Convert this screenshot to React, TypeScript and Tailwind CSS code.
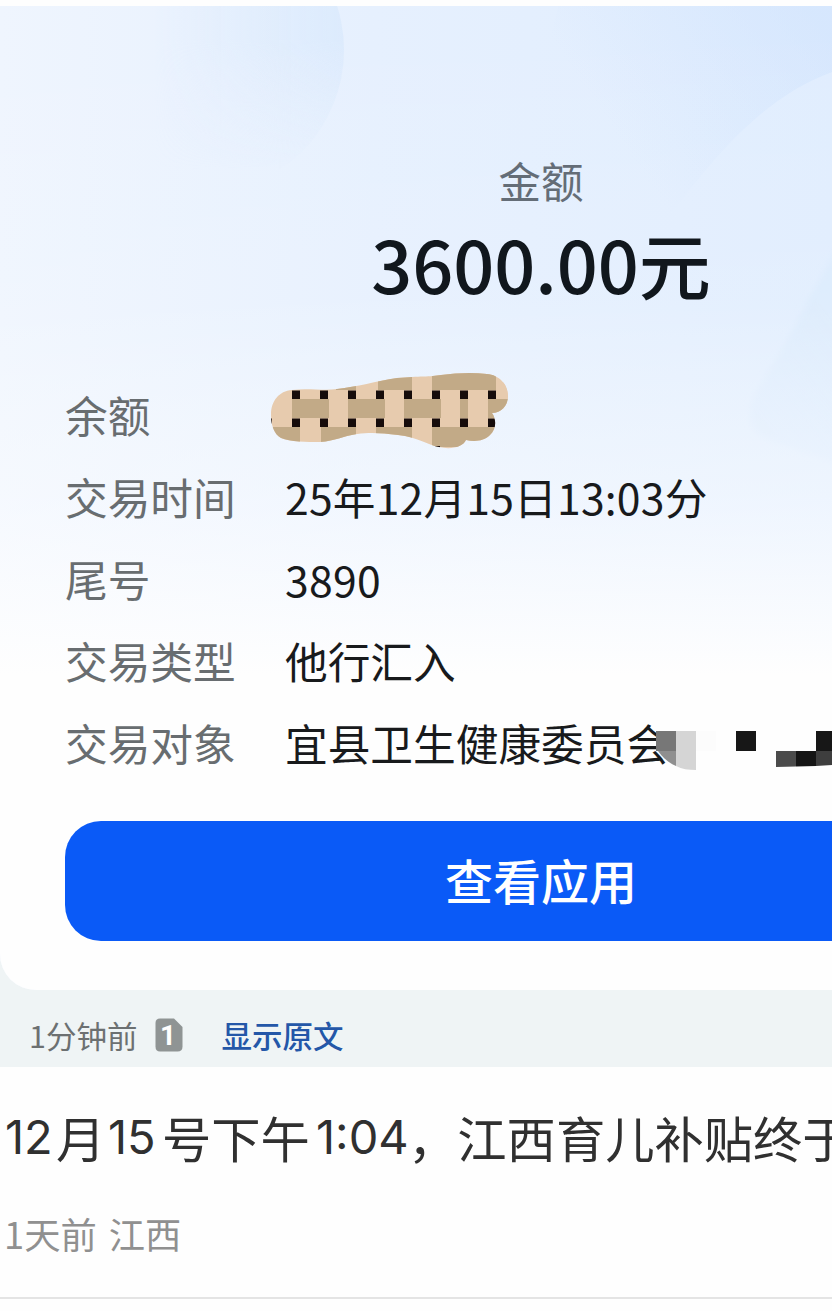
import type { ReactNode } from 'react';

const ROWS: { label: string; value: ReactNode }[] = [
  { label: '余额', value: <BalanceMask /> },
  { label: '交易时间', value: <span className="tracking-[0.2px]">25年12月15日13:03分</span> },
  { label: '尾号', value: <span className="tracking-[0.3px]">3890</span> },
  { label: '交易类型', value: '他行汇入' },
  {
    label: '交易对象',
    value: (
      <>
        宜县卫生健康委员会
        <PayeeMask />
      </>
    ),
  },
];

const DOT_COLUMNS = [292, 320, 348, 376, 404, 432, 460, 488];
const TAN_BLOCKS = [
  // x, y, width, height
  [336, 380, 20, 10],
  [378, 370, 34, 20],
  [432, 365, 64, 25],
  [292, 399, 37, 19],
  [348, 399, 37, 19],
  [404, 399, 37, 19],
  [460, 399, 8, 19],
  [488, 399, 22, 19],
  [268, 427, 32, 18],
  [321, 427, 35, 18],
  [376, 427, 36, 18],
  [432, 427, 68, 20],
];

/* Plaid brush stroke hiding the balance */
function BalanceMask() {
  return (
    <svg className="absolute -left-[17px] -top-[5px] h-[80px] w-[244px]" viewBox="268 370 244 80">
      <defs>
        <clipPath id="stroke">
          <path d="M271 415C271 401 279 391 292 390C308 388 325 391 337 389C357 387 376 381 397 378C420 376 430 377 441 375C456 373 472 372 487 374C499 375 508 384 508 396C508 406 501 413 492 413C497 420 496 430 490 435C484 441 475 442 466 440C463 447 451 450 439 447C427 445 418 437 398 435C382 433 371 432 357 434C342 436 336 441 320 442C307 442 290 442 281 438C274 434 271 425 271 415Z" />
        </clipPath>
      </defs>
      <g clipPath="url(#stroke)">
        <rect x="268" y="370" width="244" height="80" fill="#e7cbae" />
        {TAN_BLOCKS.map(([x, y, w, h]) => (
          <rect key={`${x}-${y}`} x={x} y={y} width={w} height={h} fill="#c2aa87" />
        ))}
        <rect x="496" y="382" width="14" height="17" fill="#e7cbae" />
        {DOT_COLUMNS.map((x) => (
          <g key={x} fill="#160c0b">
            <rect x={x} y="390.5" width="8" height="8.5" />
            <rect x={x} y="418.5" width="8" height="8.5" />
          </g>
        ))}
        <rect x="264" y="418.5" width="8" height="8.5" fill="#160c0b" />
        <rect x="432" y="446" width="8" height="8" fill="#160c0b" />
      </g>
    </svg>
  );
}

/* Mosaic over the rest of the payee name */
function PayeeMask() {
  return (
    <svg className="absolute left-[371px] top-0 h-[82px] w-[176px]" viewBox="656 703 176 82">
      <path d="M658 751H676V766C669 763 663 758 658 751Z" fill="#8f8f8f" />
      <path d="M656 731h20v20h-20z" fill="#777" />
      <path d="M676 731H696V770C688 770 682 769 676 766Z" fill="#d5d5d5" />
      <path d="M696 731h20v20h-20z" fill="#fcfcfc" />
      <path d="M736 731h20v20h-20z" fill="#171717" />
      <path d="M816 731h20v20h-20z" fill="#171717" />
      <path d="M776 751H796V766.500L776 767Z" fill="#4b4b4b" />
      <path d="M796 751H816V766L796 766.500Z" fill="#151515" />
      <path d="M816 751H832V765L816 766Z" fill="#3e3e3e" />
    </svg>
  );
}

function CardBackdrop() {
  return (
    <svg className="absolute left-0 top-0 h-[984px] w-[832px]" viewBox="0 6 832 984" preserveAspectRatio="none">
      <defs>
        <linearGradient id="sky" x1="0" y1="0" x2="1" y2="0">
          <stop offset="0" stopColor="#eff5fe" />
          <stop offset="0.45" stopColor="#e6f0fe" />
          <stop offset="1" stopColor="#e0edfe" />
        </linearGradient>
        <linearGradient id="fade" x1="0" y1="0" x2="0" y2="1">
          <stop offset="0" stopColor="#fff" stopOpacity="0" />
          <stop offset="0.3" stopColor="#fff" stopOpacity="0.1" />
          <stop offset="0.5" stopColor="#fcfdff" stopOpacity="0.5" />
          <stop offset="0.68" stopColor="#fefefe" stopOpacity="1" />
          <stop offset="1" stopColor="#fefefe" />
        </linearGradient>
        <linearGradient id="bubble" gradientUnits="userSpaceOnUse" x1="150" y1="0" x2="344" y2="0">
          <stop offset="0" stopColor="#d9e9fc" stopOpacity="0" />
          <stop offset="1" stopColor="#d9e9fc" stopOpacity="0.75" />
        </linearGradient>
        <linearGradient id="bubbleFade" gradientUnits="userSpaceOnUse" x1="0" y1="40" x2="0" y2="170">
          <stop offset="0" stopColor="#fff" />
          <stop offset="1" stopColor="#000" />
        </linearGradient>
        <mask id="bubbleMask">
          <rect width="832" height="300" fill="url(#bubbleFade)" />
        </mask>
        <linearGradient id="corner" gradientUnits="userSpaceOnUse" x1="832" y1="40" x2="640" y2="170">
          <stop offset="0" stopColor="#d0e3fd" stopOpacity="0.6" />
          <stop offset="1" stopColor="#d0e3fd" stopOpacity="0" />
        </linearGradient>
        <linearGradient id="wing" gradientUnits="userSpaceOnUse" x1="750" y1="400" x2="840" y2="330">
          <stop offset="0" stopColor="#d8e9fc" stopOpacity="0.5" />
          <stop offset="1" stopColor="#d8e9fc" stopOpacity="0.7" />
        </linearGradient>
        <filter id="soft">
          <feGaussianBlur stdDeviation="3" />
        </filter>
      </defs>
      <rect y="6" width="832" height="984" fill="url(#sky)" />
      <circle cx="200" cy="50" r="144" fill="url(#bubble)" mask="url(#bubbleMask)" />
      <path d="M560 0H832V72C770 95 720 145 660 230H500Z" fill="url(#corner)" />
      <path d="M850 225C815 285 790 340 756 392C746 412 748 430 764 438C795 450 820 456 850 470Z" fill="url(#wing)" filter="url(#soft)" />
      <rect y="6" width="832" height="984" fill="url(#fade)" />
    </svg>
  );
}

function SimBadge() {
  return (
    <svg className="ml-[18px] h-[34px] w-[28px]" viewBox="0 0 28 34">
      <path d="M5 0.500H19L27.500 9V28.500Q27.500 33.500 22.500 33.500H5Q0.500 33.500 0.500 28.500V5Q0.500 0.500 5 0.500Z" fill="#8f9494" />
      <text x="13" y="27" textAnchor="middle" fontSize="28" fontWeight="700" fill="#fff" fontFamily="Roboto, sans-serif">
        1
      </text>
    </svg>
  );
}

export default function App() {
  return (
    <main className="h-[1311px] w-[832px] overflow-hidden bg-[#fefefe] pt-1.5 font-['Noto_Sans_CJK_SC',sans-serif]">
      <div className="bg-[#eff4f5]">
        {/* Card is wider than the viewport, its right edge is cropped */}
        <section className="relative h-[984px] w-[1082px] overflow-hidden rounded-b-[36px] bg-[#fefefe]">
          <CardBackdrop />
          <div className="relative px-[65px] pt-[142px]">
            <div className="text-center text-[42.500px] leading-[64px] text-[#646d77]">金额</div>
            <div className="mt-[3px] text-center text-[72px] leading-[96px] font-medium text-[#11171d]">3600.00元</div>
            <dl className="mt-[64px] text-[42.700px] leading-[78px]">
              {ROWS.map((row) => (
                <div key={row.label} className="flex h-[82px]">
                  <dt className="w-[220px] shrink-0 text-[#686d70]">{row.label}</dt>
                  <dd className="relative text-[#181a1c]">{row.value}</dd>
                </div>
              ))}
            </dl>
            <button className="mt-[36px] block h-[120px] w-full rounded-[36px] bg-[#0a5af7] pb-[4px] text-[48px] leading-[116px] font-medium text-white">
              查看应用
            </button>
          </div>
        </section>
        <div className="flex h-[77px] items-center pt-[12px] pl-[29px] text-[30.500px] leading-[44px] text-[#6c7071]">
          <span>1分钟前</span>
          <SimBadge />
          <a className="ml-[38px] font-medium text-[#2457a8]">显示原文</a>
        </div>
      </div>
      <section className="border-b-2 border-[#e4e4e4] pt-[34px] pb-[38px]">
        <p className="flex text-[49.300px] leading-[72px] whitespace-nowrap text-[#303030]">
          <span className="w-[56px] shrink-0 pl-[5px] font-['Inter'] text-[47px]">12</span>
          <span className="w-[52px] shrink-0">月</span>
          <span className="w-[54px] shrink-0 font-['Inter'] text-[47px]">15</span>
          <span className="w-[154px] shrink-0">号下午</span>
          <span className="w-[92px] shrink-0 font-['Inter'] text-[47px]">1:04</span>
          <span className="shrink-0">，江西育儿补贴终于</span>
        </p>
        <div className="mt-[34px] flex gap-[12px] pl-1 text-[36.300px] leading-[52px] text-[#909090]">
          <span>1天前</span>
          <span>江西</span>
        </div>
      </section>
    </main>
  );
}
